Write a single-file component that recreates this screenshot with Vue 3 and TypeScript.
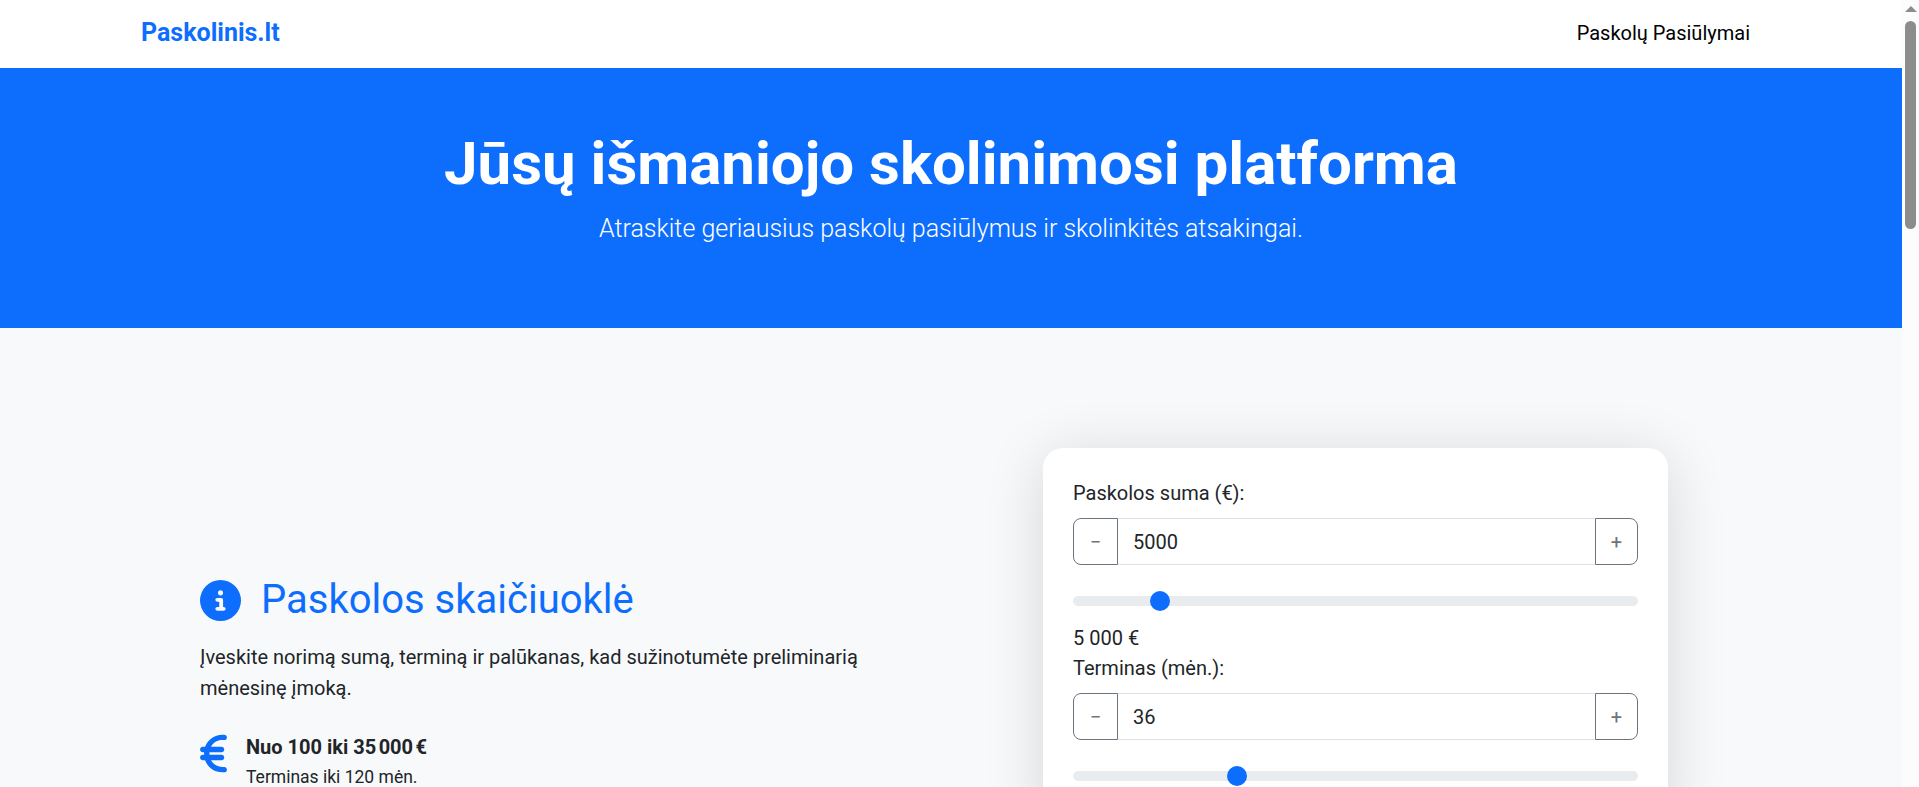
<template>
  <div class="page">
    <div class="main">
      <nav class="navbar">
        <a class="brand" href="#">Paskolinis.lt</a>
        <a class="nav-link" href="#">Paskolų Pasiūlymai</a>
      </nav>

      <header class="hero">
        <h1>Jūsų išmaniojo skolinimosi platforma</h1>
        <p>Atraskite geriausius paskolų pasiūlymus ir skolinkitės atsakingai.</p>
      </header>

      <section class="calculator">
        <div class="intro">
          <h2>
            <svg class="info-icon" viewBox="0 0 512 512" aria-hidden="true">
              <path
                d="M256 512A256 256 0 1 0 256 0a256 256 0 1 0 0 512zM216 336l24 0 0-64-24 0c-13.3 0-24-10.7-24-24s10.7-24 24-24l48 0c13.3 0 24 10.7 24 24l0 88 8 0c13.3 0 24 10.7 24 24s-10.7 24-24 24l-80 0c-13.3 0-24-10.7-24-24s10.7-24 24-24zm40-208a32 32 0 1 1 0 64 32 32 0 1 1 0-64z"
              />
            </svg>
            Paskolos skaičiuoklė
          </h2>
          <p class="lead-text">
            Įveskite norimą sumą, terminą ir palūkanas, kad sužinotumėte preliminarią mėnesinę įmoką.
          </p>
          <div class="feature">
            <svg class="euro-icon" viewBox="0 0 320 512" aria-hidden="true">
              <path
                d="M48.1 240c-.1 2.7-.1 5.3-.1 8l0 16c0 2.7 0 5.3 .1 8L32 272c-17.7 0-32 14.3-32 32s14.3 32 32 32l28.3 0C89.9 419.9 170 480 264 480l24 0c17.7 0 32-14.3 32-32s-14.3-32-32-32l-24 0c-57.9 0-108.2-32.4-133.9-80L256 336c17.7 0 32-14.3 32-32s-14.3-32-32-32l-143.8 0c-.1-2.6-.2-5.3-.2-8l0-16c0-2.7 .1-5.4 .2-8L256 240c17.7 0 32-14.3 32-32s-14.3-32-32-32l-125.9 0c25.7-47.6 76-80 133.9-80l24 0c17.7 0 32-14.3 32-32s-14.3-32-32-32l-24 0C170 32 89.9 92.1 60.3 176L32 176c-17.7 0-32 14.3-32 32s14.3 32 32 32l16.1 0z"
              />
            </svg>
            <div>
              <strong>Nuo 100 iki 35&#8239;000&#8239;€</strong>
              <small>Terminas iki 120 mėn.</small>
            </div>
          </div>
        </div>

        <form class="card" @submit.prevent>
          <label for="amount">Paskolos suma (€):</label>
          <div class="input-group">
            <button type="button" class="step left" @click="amount = Math.max(100, amount - 100)">−</button>
            <input id="amount" v-model.number="amount" type="number" />
            <button type="button" class="step right" @click="amount = Math.min(35000, amount + 100)">+</button>
          </div>
          <input v-model.number="amount" class="range" type="range" min="100" max="35000" step="100" />
          <div class="value">{{ formattedAmount }}</div>

          <label for="term">Terminas (mėn.):</label>
          <div class="input-group">
            <button type="button" class="step left" @click="term = Math.max(3, term - 1)">−</button>
            <input id="term" v-model.number="term" type="number" />
            <button type="button" class="step right" @click="term = Math.min(120, term + 1)">+</button>
          </div>
          <input v-model.number="term" class="range" type="range" min="3" max="120" step="1" />
        </form>
      </section>
    </div>

    <!-- page scrollbar as it looks in the browser -->
    <div class="scrollbar" aria-hidden="true">
      <span class="arrow up"></span>
      <div class="track"><span class="thumb"></span></div>
    </div>
  </div>
</template>

<script setup lang="ts">
import { computed, ref } from 'vue'

const amount = ref(5000)
const term = ref(36)

const formattedAmount = computed(
  () => `${String(amount.value).replace(/\B(?=(\d{3})+$)/g, ' ')} €`,
)
</script>

<style>
html,
body {
  margin: 0;
  overflow: hidden;
}
</style>

<style scoped>
.page {
  display: flex;
  height: 100vh;
  overflow: hidden;
  font-family: Roboto, 'Liberation Sans', sans-serif;
  font-size: 20px;
  color: #212529;
  background: #fff;
}

.main {
  flex: 1;
  min-width: 0;
  overflow: hidden;
  background: #f8f9fa;
}

.navbar {
  display: flex;
  align-items: center;
  justify-content: space-between;
  height: 68px;
  box-sizing: border-box;
  padding: 0 152px 2px 141px;
  background: #fff;
}

.brand {
  font-size: 25px;
  font-weight: 700;
  line-height: 30px;
  color: #0d6efd;
  text-decoration: none;
}

.nav-link {
  font-size: 20px;
  line-height: 30px;
  color: #000;
  text-decoration: none;
}

.hero {
  height: 260px;
  box-sizing: border-box;
  padding-top: 60px;
  text-align: center;
  color: #fff;
  background: #0d6efd;
}

.hero h1 {
  margin: 0;
  font-size: 60px;
  font-weight: 700;
  line-height: 72px;
}

.hero p {
  margin: 11px 0 0;
  font-size: 25px;
  font-weight: 300;
  line-height: 36px;
}

.calculator {
  display: flex;
  align-items: flex-start;
  padding: 120px 234px 0 200px;
  justify-content: space-between;
}

.intro {
  width: 680px;
  padding-top: 128px;
}

.intro h2 {
  display: flex;
  align-items: center;
  gap: 20px;
  margin: 0 0 18px;
  font-size: 40px;
  font-weight: 400;
  line-height: 48px;
  color: #0d6efd;
}

.info-icon {
  width: 41px;
  height: 41px;
  fill: #0d6efd;
}

.lead-text {
  margin: 0 0 28px;
  font-size: 20px;
  line-height: 31px;
}

.feature {
  display: flex;
  gap: 19px;
}

.euro-icon {
  flex: none;
  width: 27px;
  height: 43px;
  fill: #0d6efd;
}

.feature strong {
  display: block;
  font-size: 20px;
  line-height: 30px;
}

.feature small {
  display: block;
  font-size: 17.5px;
  line-height: 30px;
}

.card {
  flex: none;
  width: 625px;
  box-sizing: border-box;
  padding: 30px;
  background: #fff;
  border-radius: 20px;
  box-shadow: 0 8px 60px rgba(0, 0, 0, 0.14);
}

.card label,
.value {
  display: block;
  font-size: 20px;
  line-height: 30px;
}

.input-group {
  display: flex;
  height: 47px;
  margin-top: 10px;
}

.input-group input {
  flex: 1;
  min-width: 0;
  box-sizing: border-box;
  padding: 0 15px;
  border: 1px solid #dee2e6;
  border-width: 1px 0;
  outline: none;
  font: inherit;
  font-size: 20px;
  color: #212529;
  background: #fff;
  appearance: textfield;
}

.step {
  flex: none;
  width: 45px;
  padding: 0;
  font-family: inherit;
  font-size: 20px;
  color: #6c757d;
  background: transparent;
  border: 1px solid #6c757d;
}

.step.left {
  border-radius: 8px 0 0 8px;
}

.step.right {
  width: 43px;
  border-radius: 0 8px 8px 0;
}

.range {
  display: block;
  width: 100%;
  height: 24px;
  margin: 24px 0 10px;
  background: transparent;
  appearance: none;
}

.range::-webkit-slider-runnable-track {
  height: 10px;
  background: #e9ecef;
  border-radius: 5px;
}

.range::-webkit-slider-thumb {
  width: 20px;
  height: 20px;
  margin-top: -5px;
  background: #0d6efd;
  border: 0;
  border-radius: 50%;
  appearance: none;
}

.scrollbar {
  flex: none;
  display: flex;
  flex-direction: column;
  width: 17px;
  background: #fcfcfc;
}

.arrow {
  flex: none;
  display: flex;
  align-items: center;
  justify-content: center;
  height: 17px;
}

.arrow::before {
  content: '';
  border-left: 6px solid transparent;
  border-right: 6px solid transparent;
}

.arrow.up::before {
  border-bottom: 6px solid #8c8c8c;
}

.track {
  flex: 1;
  padding: 4px 0 0 3px;
}

.thumb {
  display: block;
  width: 11px;
  height: 208px;
  background: #8c8c8c;
  border-radius: 6px;
}
</style>
